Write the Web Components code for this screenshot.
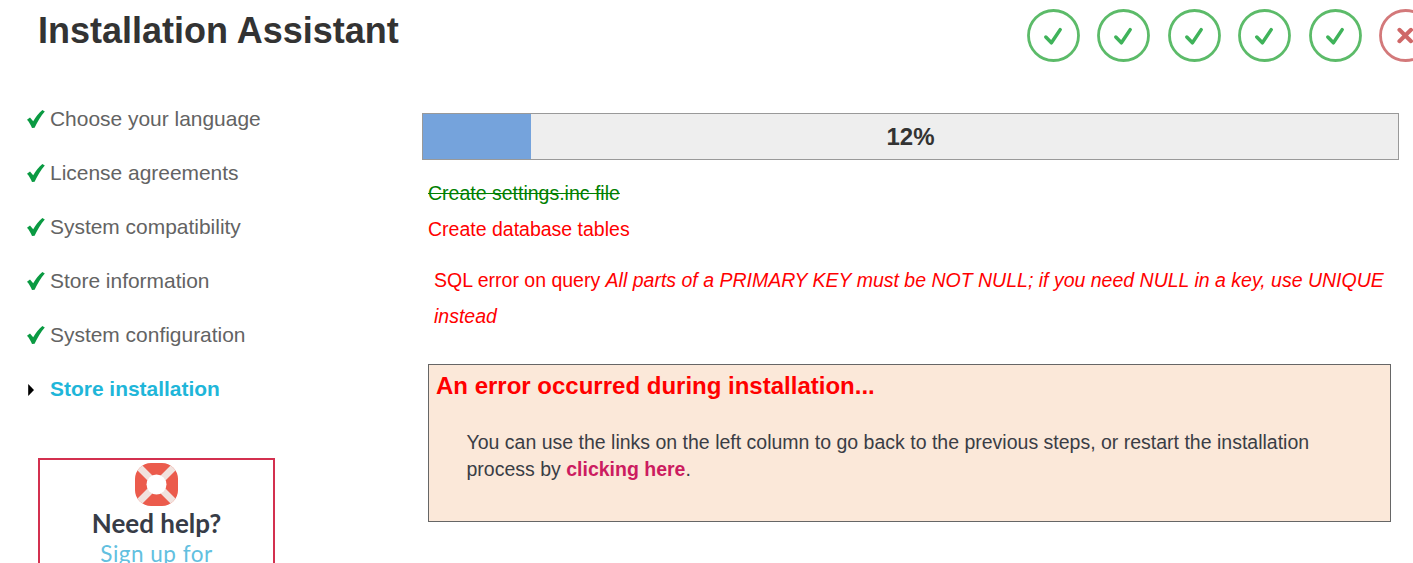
<!DOCTYPE html>
<html lang="en">
<head>
<meta charset="utf-8">
<title>Installation Assistant</title>
<style>
  html, body { margin: 0; height: 563px; overflow: hidden; background: #fff; }
  body { font-family: "Liberation Sans", Arial, sans-serif; }
</style>
</head>
<body>
<install-page>
  <install-header slot="header" title-text="Installation Assistant">
    <step-badge state="ok"></step-badge>
    <step-badge state="ok"></step-badge>
    <step-badge state="ok"></step-badge>
    <step-badge state="ok"></step-badge>
    <step-badge state="ok"></step-badge>
    <step-badge state="fail"></step-badge>
  </install-header>
  <side-column slot="side">
    <nav-step state="done">Choose your language</nav-step>
    <nav-step state="done">License agreements</nav-step>
    <nav-step state="done">System compatibility</nav-step>
    <nav-step state="done">Store information</nav-step>
    <nav-step state="done">System configuration</nav-step>
    <nav-step state="current">Store installation</nav-step>
    <help-box slot="help"></help-box>
  </side-column>
  <main-column slot="main">
    <progress-line value="12"></progress-line>
    <task-line state="done">Create settings.inc file</task-line>
    <task-line state="failed">Create database tables</task-line>
    <sql-error>SQL error on query <em>All parts of a PRIMARY KEY must be NOT NULL; if you need NULL in a key, use UNIQUE instead</em></sql-error>
    <error-box heading="An error occurred during installation...">You can use the links on the left column to go back to the previous steps, or restart the installation process by <a href="#">clicking here</a>.</error-box>
  </main-column>
</install-page>

<script>
class InstallPage extends HTMLElement {
  constructor() {
    super();
    this.attachShadow({ mode: "open" });
    this.shadowRoot.innerHTML = `
      <style>
        :host { display: block; width: 1413px; height: 563px; overflow: hidden; }
        .cols { display: grid; grid-template-columns: 422px 977px; }
      </style>
      <slot name="header"></slot>
      <div class="cols">
        <slot name="side"></slot>
        <slot name="main"></slot>
      </div>
    `;
  }
}
customElements.define("install-page", InstallPage);

class InstallHeader extends HTMLElement {
  constructor() {
    super();
    this.attachShadow({ mode: "open" });
    this.shadowRoot.innerHTML = `
      <style>
        :host { display: flex; justify-content: space-between; height: 104px; overflow: hidden; }
        h1 { margin: 9px 0 0 38px; font-size: 36px; line-height: 43px; font-weight: bold; color: #333; }
        .steps { display: flex; gap: 17.5px; padding: 9px 0 0 0; margin-right: -19px; flex: none; align-self: flex-start; }
      </style>
      <h1></h1>
      <div class="steps"><slot></slot></div>
    `;
    this.shadowRoot.querySelector("h1").textContent = this.getAttribute("title-text") || "";
  }
}
customElements.define("install-header", InstallHeader);

class StepBadge extends HTMLElement {
  connectedCallback() {
    const ok = this.getAttribute("state") === "ok";
    const ring = ok ? "#5cbb69" : "#d3797a";
    const mark = ok
      ? `<path d="M18.8 28l5.6 5.8L33.2 20.6" fill="none" stroke="#3fb35a" stroke-width="3.5" stroke-linecap="round" stroke-linejoin="round"/>`
      : `<path d="M20.4 20.8l11.6 11.4M32 20.8L20.4 32.2" fill="none" stroke="#cf6767" stroke-width="4" stroke-linecap="round"/>`;
    this.attachShadow({ mode: "open" }).innerHTML = `
      <style>
        :host { display: block; width: 53px; height: 53px; flex: none; }
        svg { display: block; }
      </style>
      <svg width="53" height="53" viewBox="0 0 53 53">
        <circle cx="26.5" cy="26.5" r="25" fill="#fff" stroke="${ring}" stroke-width="2.8"/>
        ${mark}
      </svg>
    `;
  }
}
customElements.define("step-badge", StepBadge);

class SideColumn extends HTMLElement {
  constructor() {
    super();
    this.attachShadow({ mode: "open" });
    this.shadowRoot.innerHTML = `
      <style>
        :host { display: block; }
        ul { display: flex; flex-direction: column; gap: 24px; margin: 0; padding: 0 0 0 27px; list-style: none; }
        .help { margin: 54px 0 0 38px; }
      </style>
      <ul><slot></slot></ul>
      <div class="help"><slot name="help"></slot></div>
    `;
  }
}
customElements.define("side-column", SideColumn);

class NavStep extends HTMLElement {
  connectedCallback() {
    const done = this.getAttribute("state") === "done";
    const icon = done
      ? `<svg width="18" height="18" viewBox="0 0 18 18"><path d="M0 9.800L3 7.400l3.200 3.900C8.600 7 11.600 3.200 15.400 0l2.400 1.500C13.800 6.200 10.600 11.200 7.600 17.800L5 18C3.800 15 2.200 12.200 0 9.800z" fill="#0a9a42"/></svg>`
      : `<svg width="18" height="18" viewBox="0 0 18 18"><path d="M1.200 3l5.800 6-5.800 6z" fill="#000"/></svg>`;
    this.attachShadow({ mode: "open" }).innerHTML = `
      <style>
        :host { display: flex; align-items: center; height: 30px; font-size: 20.95px; color: #636363; }
        :host([state="current"]) { font-weight: bold; color: #1fb6d9; }
        .ic { display: block; width: 18px; height: 18px; margin: 0 5px 2px 0; flex: none; }
        :host([state="current"]) .ic { margin-bottom: 0; }
      </style>
      <span class="ic">${icon}</span><slot></slot>
    `;
  }
}
customElements.define("nav-step", NavStep);

class HelpBox extends HTMLElement {
  constructor() {
    super();
    this.attachShadow({ mode: "open" });
    this.shadowRoot.innerHTML = `
      <style>
        :host { display: flex; flex-direction: column; align-items: center; box-sizing: border-box; width: 237px; height: 200px;
          padding-top: 2.500px; border: 2px solid #d3304f; font-family: Lato, "Noto Sans", sans-serif; }
        svg { display: block; }
        b { margin-top: 2px; font-size: 26px; line-height: 30px; color: #373c47; }
        span { margin-top: 1px; font-size: 22.5px; line-height: 30px; color: #62c0df; letter-spacing: .5px; }
      </style>
      <svg width="43" height="43" viewBox="0 0 43 43">
        <clipPath id="lb"><rect width="43" height="43" rx="16"/></clipPath>
        <g clip-path="url(#lb)">
          <rect width="43" height="43" fill="#eb5b4c"/>
          <path d="M0 0L43 43M43 0L0 43" stroke="#f1e2de" stroke-width="7"/>
        </g>
        <circle cx="21.500" cy="21.500" r="10" fill="#fff"/>
      </svg>
      <b>Need help?</b>
      <span>Sign up for</span>
    `;
  }
}
customElements.define("help-box", HelpBox);

class MainColumn extends HTMLElement {
  constructor() {
    super();
    this.attachShadow({ mode: "open" });
    this.shadowRoot.innerHTML = `
      <style>
        :host { display: block; padding-top: 9px; font-size: 19.5px; }
      </style>
      <slot></slot>
    `;
  }
}
customElements.define("main-column", MainColumn);

class ProgressLine extends HTMLElement {
  connectedCallback() {
    const v = this.getAttribute("value") || "0";
    this.attachShadow({ mode: "open" }).innerHTML = `
      <style>
        :host { display: block; box-sizing: border-box; position: relative; height: 47px; border: 1px solid #999; background: #eee; }
        .fill { height: 100%; width: ${v === "12" ? "108px" : v + "%"}; background: #75a3dc; }
        .label { position: absolute; inset: 0; display: flex; align-items: center; justify-content: center;
          font-size: 24px; font-weight: bold; color: #333; }
      </style>
      <div class="fill"></div>
      <div class="label">${v}%</div>
    `;
  }
}
customElements.define("progress-line", ProgressLine);

class TaskLine extends HTMLElement {
  constructor() {
    super();
    this.attachShadow({ mode: "open" });
    this.shadowRoot.innerHTML = `
      <style>
        :host { display: block; margin-left: 6px; height: 36px; line-height: 36px; color: #f00; }
        :host([state="done"]) { color: #008000; text-decoration: line-through; margin-top: 15px; }
      </style>
      <slot></slot>
    `;
  }
}
customElements.define("task-line", TaskLine);

class SqlError extends HTMLElement {
  constructor() {
    super();
    this.attachShadow({ mode: "open" });
    this.shadowRoot.innerHTML = `
      <style>
        :host { display: block; margin: 15px 0 0 12px; line-height: 36px; color: #f00; }
      </style>
      <slot></slot>
    `;
  }
}
customElements.define("sql-error", SqlError);

class ErrorBox extends HTMLElement {
  connectedCallback() {
    this.attachShadow({ mode: "open" }).innerHTML = `
      <style>
        :host { display: block; box-sizing: border-box; width: 963px; height: 158px; margin: 30px 0 0 6px; padding: 6px 7px;
          border: 1px solid #666; background: #fbe8d9; }
        h2 { margin: 0; font-size: 24px; line-height: 30px; font-weight: bold; color: #f00; }
        p { width: 880px; margin: 28px 0 0 30.500px; font-size: 19.500px; line-height: 27px; color: #3a3d45; }
        ::slotted(a) { font-weight: bold; color: #cc1c60; text-decoration: none; }
      </style>
      <h2>${this.getAttribute("heading") || ""}</h2>
      <p><slot></slot></p>
    `;
  }
}
customElements.define("error-box", ErrorBox);
</script>
</body>
</html>
